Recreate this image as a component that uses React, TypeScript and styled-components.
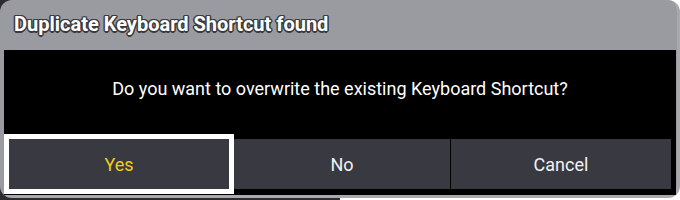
import React from "react";
import styled, { createGlobalStyle } from "styled-components";

const GlobalStyle = createGlobalStyle`
  html, body {
    margin: 0;
    padding: 0;
    background: #ffffff;
  }
  body {
    font-family: Roboto, "Liberation Sans", sans-serif;
  }
`;

const Screen = styled.div`
  width: 680px;
  height: 200px;
  background: linear-gradient(90deg, #2c2c30 0 50%, #ffffff 50% 100%);
  overflow: hidden;
`;

const Window = styled.div`
  width: 680px;
  height: 198px;
  box-sizing: border-box;
  background: #9a9ba0;
  border-radius: 12px;
  border-right: 3px solid #a8a8ad;
  border-bottom: 3px solid #a8a8ad;
  padding: 0 1px 0 4px;
  display: flex;
  flex-direction: column;
`;

const TitleBar = styled.div`
  height: 50px;
  display: flex;
  align-items: center;
  padding-left: 10px;
  padding-bottom: 2px;
  box-sizing: border-box;
`;

const Title = styled.h1`
  margin: 0;
  font-family: Roboto, "Liberation Sans", sans-serif;
  font-weight: 700;
  font-size: 20px;
  color: #ffffff;
  text-shadow:
    -1px -1px 0 #3a3a3e,
    1px -1px 0 #3a3a3e,
    -1px 1px 0 #3a3a3e,
    1px 1px 0 #3a3a3e,
    0 1.5px 0 #3a3a3e,
    0 -1.5px 0 #3a3a3e,
    1.5px 0 0 #3a3a3e,
    -1.5px 0 0 #3a3a3e;
`;

const Body = styled.div`
  flex: 1;
  background: #000000;
  display: flex;
  flex-direction: column;
`;

const Message = styled.p`
  margin: 0;
  height: 84px;
  display: flex;
  align-items: center;
  justify-content: center;
  padding-bottom: 8px;
  box-sizing: border-box;
  color: #ffffff;
  font-size: 18px;
  font-family: Roboto, "Liberation Sans", sans-serif;
`;

const ButtonRow = styled.div`
  display: grid;
  grid-template-columns: 230px 216px 221px;
  height: 60px;
`;

const DialogButton = styled.button<{ $focused?: boolean; $divider?: boolean }>`
  font-family: Roboto, "Liberation Sans", sans-serif;
  font-size: 18px;
  color: ${(p) => (p.$focused ? "#f0cf14" : "#f2f2f2")};
  background: #393941;
  background-clip: padding-box;
  border: none;
  border-left: ${(p) => (p.$divider ? "1px solid #000" : "none")};
  margin: ${(p) => (p.$focused ? "0" : "5px 0")};
  box-shadow: ${(p) => (p.$focused ? "inset 0 0 0 5px #ffffff" : "none")};
  padding: 0;
  cursor: pointer;
`;

export default function App() {
  return (
    <>
      <GlobalStyle />
      <Screen>
        <Window>
          <TitleBar>
            <Title>Duplicate Keyboard Shortcut found</Title>
          </TitleBar>
          <Body>
            <Message>Do you want to overwrite the existing Keyboard Shortcut?</Message>
            <ButtonRow>
              <DialogButton $focused>Yes</DialogButton>
              <DialogButton>No</DialogButton>
              <DialogButton $divider>Cancel</DialogButton>
            </ButtonRow>
          </Body>
        </Window>
      </Screen>
    </>
  );
}
